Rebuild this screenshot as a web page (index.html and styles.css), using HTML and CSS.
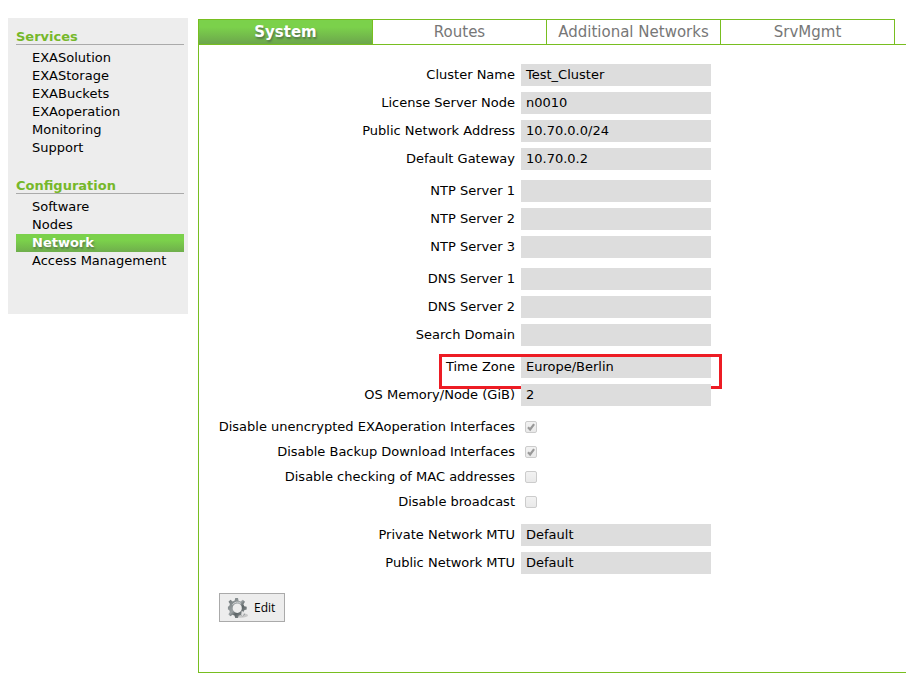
FILE: index.html
```
<!DOCTYPE html>
<html lang="en">
<head>
<meta charset="utf-8">
<title>Network</title>
<link rel="stylesheet" href="styles.css">
</head>
<body>
<div class="page">
  <nav class="sidebar">
    <h2>Services</h2>
    <ul>
      <li>EXASolution</li>
      <li>EXAStorage</li>
      <li>EXABuckets</li>
      <li>EXAoperation</li>
      <li>Monitoring</li>
      <li>Support</li>
    </ul>
    <h2>Configuration</h2>
    <ul>
      <li>Software</li>
      <li>Nodes</li>
      <li class="current">Network</li>
      <li>Access Management</li>
    </ul>
  </nav>
  <main class="panel">
    <div class="tabs">
      <div class="tab active">System</div>
      <div class="tab">Routes</div>
      <div class="tab">Additional Networks</div>
      <div class="tab">SrvMgmt</div>
    </div>
    <div class="form">
      <div class="group">
        <div class="row"><label>Cluster Name</label><span class="value">Test_Cluster</span></div>
        <div class="row"><label>License Server Node</label><span class="value">n0010</span></div>
        <div class="row"><label>Public Network Address</label><span class="value">10.70.0.0/24</span></div>
        <div class="row"><label>Default Gateway</label><span class="value">10.70.0.2</span></div>
      </div>
      <div class="group">
        <div class="row"><label>NTP Server 1</label><span class="value"></span></div>
        <div class="row"><label>NTP Server 2</label><span class="value"></span></div>
        <div class="row"><label>NTP Server 3</label><span class="value"></span></div>
      </div>
      <div class="group">
        <div class="row"><label>DNS Server 1</label><span class="value"></span></div>
        <div class="row"><label>DNS Server 2</label><span class="value"></span></div>
        <div class="row"><label>Search Domain</label><span class="value"></span></div>
      </div>
      <div class="group">
        <div class="row marked"><label>Time Zone</label><span class="value">Europe/Berlin</span></div>
        <div class="row"><label>OS Memory/Node (GiB)</label><span class="value">2</span></div>
      </div>
      <div class="group checks">
        <div class="row"><label>Disable unencrypted EXAoperation Interfaces</label><span class="box"><svg viewBox="0 0 10 10"><path d="M2 5.3 4.1 7.5 8.1 2.2"/></svg></span></div>
        <div class="row"><label>Disable Backup Download Interfaces</label><span class="box"><svg viewBox="0 0 10 10"><path d="M2 5.3 4.1 7.5 8.1 2.2"/></svg></span></div>
        <div class="row"><label>Disable checking of MAC addresses</label><span class="box"></span></div>
        <div class="row"><label>Disable broadcast</label><span class="box"></span></div>
      </div>
      <div class="group">
        <div class="row"><label>Private Network MTU</label><span class="value">Default</span></div>
        <div class="row"><label>Public Network MTU</label><span class="value">Default</span></div>
      </div>
      <button class="edit" type="button">
        <svg viewBox="0 0 24 24">
          <defs><linearGradient id="metal" x1="0" y1="0" x2="1" y2="1"><stop offset="0" stop-color="#6c7476"/><stop offset=".45" stop-color="#9ca2a4"/><stop offset=".6" stop-color="#5c6466"/><stop offset="1" stop-color="#a5aaac"/></linearGradient></defs>
          <ellipse cx="15" cy="20" rx="8" ry="2.6" fill="#c9c9c9"/>
          <path fill="url(#metal)" fill-rule="evenodd" d="M9 1h3l.6 3 2.2.9L17.300 3l2.300 2.200-1.700 2.600.9 2.200 2.700.7v3l-2.700.7-.9 2.200 1.600 2.400-2.200 2.200-2.500-1.700-2.200.9L12 23H9l-.7-2.800-2.200-.9-2.500 1.600-2.100-2.200 1.600-2.400-.8-2.200L1 13.500v-3l1.400-.6.8-2.200-1.600-2.400 2.200-2.200 2.400 1.700 2.200-.9zM11.200 7a5 5.200 0 1 0 0 10.400A5 5.200 0 1 0 11.200 7z"/>
          <path fill="none" stroke="#d5d8d9" stroke-width="1" d="M6 8.500a6 6.200 0 0 1 9-1.500"/>
          <path fill="#e2e2e2" d="M16 15l3 2-1.500 4-2-1z"/>
        </svg>
        <span>Edit</span>
      </button>
    </div>
  </main>
</div>
</body>
</html>
```
FILE: styles.css
```
* { box-sizing: border-box; }
body {
  margin: 0;
  width: 906px;
  height: 684px;
  overflow: hidden;
  background: #fff;
  color: #000;
  font: 13px/18px Verdana, "DejaVu Sans", sans-serif;
}
.page { display: flex; align-items: flex-start; gap: 10px; padding: 18px 0 0 8px; }
.sidebar { flex: none; width: 180px; height: 296px; padding: 9px 4px 0 8px; background: #ededed; }
.sidebar h2 {
  margin: 0 0 4px;
  height: 18px;
  border-bottom: 1px solid #aaa;
  color: #76b82a;
  font-size: 13px;
  font-weight: bold;
  line-height: 19px;
}
.sidebar ul { margin: 0 0 19px; padding: 0; list-style: none; }
.sidebar li { height: 18px; padding-left: 16px; white-space: nowrap; }
.sidebar .current {
  background: linear-gradient(#7bd14b 35%, #6fae4c);
  color: #fff;
  font-weight: bold;
  text-shadow: 1px 2px 2px #5d7d4d;
}
.panel { flex: 1; height: 654px; margin-top: 1px; border: solid #78be20; border-width: 1px 0 1px 1px; border-top: 0; }
.tabs { display: flex; height: 26px; border-bottom: 1px solid #78be20; }
.tab {
  width: 174px;
  height: 25px;
  border: solid #78be20;
  border-width: 1px 1px 0 0;
  color: #777;
  font-size: 15px;
  line-height: 25px;
  text-align: center;
  white-space: nowrap;
}
.tab.active {
  background: linear-gradient(#7bd14b 30%, #6ca64c);
  color: #fff;
  font-weight: bold;
  text-shadow: 1px 2px 2px #55764a;
}
.form { display: flex; flex-direction: column; align-items: flex-start; gap: 10px; padding-top: 19px; }
.group { display: flex; flex-direction: column; gap: 6px; }
.checks { gap: 3px; margin-bottom: 1px; }
.row { position: relative; display: grid; grid-template-columns: 316px 190px; column-gap: 6px; height: 22px; line-height: 22px; white-space: nowrap; }
.row label { justify-self: end; }
.value { padding-left: 5px; background: #ddd; }
.box {
  align-self: center;
  width: 12px;
  height: 12px;
  margin-left: 4px;
  border: 1px solid #ccc;
  border-radius: 2px;
  background: linear-gradient(#f2f2f2, #e9e9e9);
}
.box svg { display: block; width: 10px; height: 10px; }
.box path { fill: none; stroke: #999; stroke-width: 2.2; }
.marked::after {
  content: "";
  position: absolute;
  left: 240px;
  top: -2px;
  width: 277px;
  height: 29px;
  border: 3px solid #ed1c24;
}
.edit {
  display: flex;
  align-items: center;
  gap: 5px;
  width: 66px;
  height: 29px;
  margin: 9px 0 0 20px;
  padding: 0 0 0 7px;
  border: 1px solid #aaa;
  background: #ededed;
  color: #000;
  font: 12px "Open Sans", sans-serif;
}
.edit svg { width: 22px; height: 24px; }
```
